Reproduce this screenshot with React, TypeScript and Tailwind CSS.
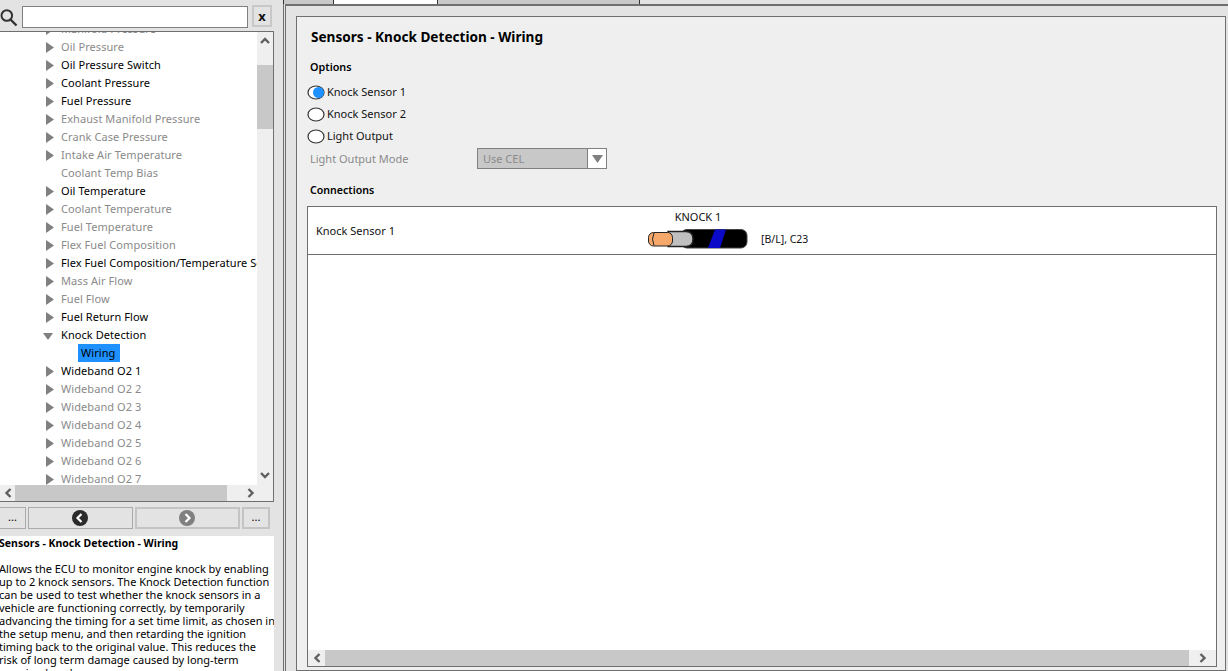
const font = { fontFamily: '"Noto Sans", sans-serif' }

type Row = { label: string; dark?: boolean; noArrow?: boolean }

const rows: Row[] = [
  { label: 'Manifold Pressure' },
  { label: 'Oil Pressure' },
  { label: 'Oil Pressure Switch', dark: true },
  { label: 'Coolant Pressure', dark: true },
  { label: 'Fuel Pressure', dark: true },
  { label: 'Exhaust Manifold Pressure' },
  { label: 'Crank Case Pressure' },
  { label: 'Intake Air Temperature' },
  { label: 'Coolant Temp Bias', noArrow: true },
  { label: 'Oil Temperature', dark: true },
  { label: 'Coolant Temperature' },
  { label: 'Fuel Temperature' },
  { label: 'Flex Fuel Composition' },
  { label: 'Flex Fuel Composition/Temperature Sensor', dark: true },
  { label: 'Mass Air Flow' },
  { label: 'Fuel Flow' },
  { label: 'Fuel Return Flow', dark: true },
]

const widebands = ['Wideband O2 2', 'Wideband O2 3', 'Wideband O2 4', 'Wideband O2 5', 'Wideband O2 6', 'Wideband O2 7']

function RightArrow() {
  return (
    <svg width="8" height="11" viewBox="0 0 8 11" className="shrink-0">
      <path d="M0 0 L8 5.5 L0 11 Z" fill="#808080" />
    </svg>
  )
}

function TreeRow({ label, dark, noArrow }: Row) {
  return (
    <div className="flex h-[18px] shrink-0 items-center whitespace-nowrap">
      <div className="flex w-[61px] shrink-0 justify-start pl-[46px]">{!noArrow && <RightArrow />}</div>
      <span className={dark ? 'text-black' : 'text-[#8a8a8a]'}>{label}</span>
    </div>
  )
}

function Chevron({ dir }: { dir: 'up' | 'down' | 'left' | 'right' }) {
  const d = {
    up: 'M1 6 L5 2 L9 6',
    down: 'M1 2 L5 6 L9 2',
    left: 'M6.5 1 L2.5 5 L6.5 9',
    right: 'M1.5 1 L5.5 5 L1.5 9',
  }[dir]
  const box = dir === 'up' || dir === 'down' ? '0 0 10 8' : '0 0 8 10'
  const w = dir === 'up' || dir === 'down' ? 10 : 8
  const h = dir === 'up' || dir === 'down' ? 8 : 10
  return (
    <svg width={w} height={h} viewBox={box}>
      <path d={d} fill="none" stroke="#606060" strokeWidth="2.4" />
    </svg>
  )
}

function Radio({ label, checked, top }: { label: string; checked?: boolean; top: string }) {
  return (
    <div className={`flex h-[18px] items-center ${top}`}>
      <svg width="18" height="15" viewBox="0 0 18 15" className="shrink-0">
        <ellipse cx="9" cy="7.5" rx="8" ry="6.5" fill="#fff" stroke="#333" strokeWidth="1.2" />
        {checked && <ellipse cx="11.5" cy="7.5" rx="5.5" ry="5.5" fill="#1e90ff" />}
      </svg>
      <span className="ml-[2px] text-[#111]">{label}</span>
    </div>
  )
}

function NavCircle({ dir, color }: { dir: 'left' | 'right'; color: string }) {
  return (
    <svg width="16" height="16" viewBox="0 0 16 16">
      <circle cx="8" cy="8" r="8" fill={color} />
      <path
        d={dir === 'left' ? 'M9.5 4 L5.5 8 L9.5 12' : 'M6.5 4 L10.5 8 L6.5 12'}
        fill="none"
        stroke="#fff"
        strokeWidth="2.2"
      />
    </svg>
  )
}

function Cable() {
  return (
    <svg width="100" height="20" viewBox="0 0 100 20" className="block">
      <rect x="33" y="0.5" width="66" height="18.5" rx="6" fill="#000" stroke="#444" />
      <path d="M67 0.5 H78 L72 19 H60 Z" fill="#0a0ac8" />
      <path d="M20 2.5 H38 Q45 2.5 45 10 Q45 17.5 38 17.5 H20 Z" fill="#c0c0c0" stroke="#222" strokeWidth="1.4" />
      <rect x="0.5" y="3.5" width="24" height="13.5" rx="5" fill="#f5a86a" stroke="#222" />
      <path d="M6 4 Q3 10 6 16.5" fill="none" stroke="#222" />
    </svg>
  )
}

export default function App() {
  return (
    <div className="flex h-[671px] w-[1228px] overflow-hidden bg-[#e3e3e3] text-[11px] leading-[18px]" style={font}>
      {/* Left column */}
      <div className="flex w-[283px] shrink-0 flex-col">
        <div className="flex h-[31px] w-[274px] items-start pt-[5px]">
          <div className="w-[22px] shrink-0 pt-[3px]">
            <svg width="18" height="19" viewBox="0 0 18 19" className="block">
              <circle cx="6.8" cy="7.5" r="5.3" fill="none" stroke="#333" strokeWidth="2" />
              <path d="M10.5 11.5 L16.5 17.5" stroke="#333" strokeWidth="2.4" />
            </svg>
          </div>
          <div className="mt-[1px] h-[22px] w-[226px] border border-[#808080] bg-white" />
          <div className="ml-[4px] flex h-[22px] w-[20px] items-center justify-center border-2 border-[#c8c8c8] text-[13px] font-bold text-[#111]">
            x
          </div>
        </div>

        {/* Tree */}
        <div className="flex h-[471px] w-[274px] flex-col border-t border-r border-b border-[#6f6f6f] bg-[#efefef]">
          <div className="flex h-[453px]">
            <div className="h-full w-[257px] overflow-hidden bg-white tracking-[0.07px]">
              <div className="-mt-[12px] flex flex-col">
                {rows.map((row) => (
                  <TreeRow key={row.label} {...row} />
                ))}
                <div className="flex h-[18px] shrink-0 items-center">
                  <div className="w-[61px] pl-[43px]">
                    <svg width="10" height="7" viewBox="0 0 10 7" className="mt-[2px] block">
                      <path d="M0 0 H10 L5 7 Z" fill="#808080" />
                    </svg>
                  </div>
                  <span className="text-black">Knock Detection</span>
                </div>
                <div className="flex h-[18px] shrink-0 items-center pl-[78px]">
                  <span className="h-[18px] w-[42px] bg-[#1e90ff] pl-[3px] text-black">Wiring</span>
                </div>
                <TreeRow label="Wideband O2 1" dark />
                {widebands.map((label) => (
                  <TreeRow key={label} label={label} />
                ))}
              </div>
            </div>
            <div className="flex flex-1 flex-col items-center pb-[6px]">
              <div className="flex h-[33px] w-full justify-center pt-[5px]">
                <Chevron dir="up" />
              </div>
              <div className="h-[64px] w-full shrink-0 bg-[#c8c8c8]" />
              <div className="flex-1" />
              <Chevron dir="down" />
            </div>
          </div>
          <div className="flex h-[16px] items-center">
            <div className="flex w-[15px] justify-center">
              <Chevron dir="left" />
            </div>
            <div className="h-full w-[212px] bg-[#c8c8c8]" />
            <div className="flex flex-1 justify-center pl-[2px]">
              <Chevron dir="right" />
            </div>
          </div>
        </div>

        {/* Nav buttons */}
        <div className="flex h-[34px] w-[274px] items-start pt-[5px]">
          <div className="flex h-[22px] w-[26px] items-center justify-center border border-l-0 border-[#aaa] pb-[2px]">...</div>
          <div className="ml-[2px] flex h-[22px] w-[105px] items-center justify-center border border-[#aaa] pr-[1px]">
            <NavCircle dir="left" color="#2b2b2b" />
          </div>
          <div className="ml-[2px] flex h-[22px] w-[105px] items-center justify-center border-2 border-[#c4c4c4] pr-[2px]">
            <NavCircle dir="right" color="#808080" />
          </div>
          <div className="ml-[2px] flex h-[22px] w-[28px] items-center justify-center border-2 border-[#c4c4c4] pb-[2px]">...</div>
        </div>

        {/* Help text */}
        <div className="w-[274px] flex-1 overflow-hidden bg-white leading-[13px] text-black">
          <div className="-ml-[1px] w-[276px] whitespace-nowrap pt-[1px]">
            <div className="text-[10.5px] font-bold">Sensors - Knock Detection - Wiring</div>
            <p className="mt-[12px]">
              Allows the ECU to monitor engine knock by enabling
              <br />
              up to 2 knock sensors. The Knock Detection function
              <br />
              can be used to test whether the knock sensors in a
              <br />
              vehicle are functioning correctly, by temporarily
              <br />
              advancing the timing for a set time limit, as chosen in
              <br />
              the setup menu, and then retarding the ignition
              <br />
              timing back to the original value. This reduces the
              <br />
              risk of long term damage caused by long-term
              <br />
              ongoing knock.
            </p>
          </div>
        </div>
      </div>

      {/* Right column */}
      <div className="flex flex-1 flex-col">
        <div className="flex h-[4px] shrink-0">
          <div className="h-full w-[50px] border-l border-[#333] bg-[#c8c8c8]" />
          <div className="h-full w-[105px] border-x border-[#333] bg-white" />
          <div className="h-full w-[202px] border-r border-[#333] bg-[#c8c8c8]" />
        </div>
        <div className="flex min-h-0 flex-1 flex-col border-l border-[#6f6f6f] pl-[1px]">
          <div className="flex min-h-0 flex-1 flex-col border-t-2 border-l border-[#6f6f6f] pt-[10px] pr-[2px] pl-[10px]">
            <div className="flex min-h-0 flex-1 flex-col border border-[#6f6f6f] bg-[#efefef] pr-[8px] pb-[3px] pl-[10px]">
              <div className="pt-[11px] pl-[4px] text-[13.6px] font-bold text-black">Sensors - Knock Detection - Wiring</div>
              <div className="mt-[12px] pl-[3px] text-[10.8px] font-semibold text-black">Options</div>
              <Radio label="Knock Sensor 1" checked top="mt-[7px]" />
              <Radio label="Knock Sensor 2" top="mt-[4px]" />
              <Radio label="Light Output" top="mt-[4px]" />
              <div className="mt-[3px] flex h-[21px] items-center pl-[3px] text-[#8a8a8a]">
                <span className="w-[167px]">Light Output Mode</span>
                <div className="flex h-[21px] w-[130px] border border-[#808080] bg-[#c8c8c8]">
                  <span className="flex-1 pl-[5px] leading-[19px]">Use CEL</span>
                  <div className="flex w-[19px] items-center justify-center border-l border-[#808080] bg-white">
                    <svg width="11" height="8" viewBox="0 0 11 8">
                      <path d="M0 0 H11 L5.5 8 Z" fill="#808080" />
                    </svg>
                  </div>
                </div>
              </div>
              <div className="mt-[12px] pl-[3px] text-[10.6px] font-semibold text-black">Connections</div>

              {/* Connections table */}
              <div className="mt-[7px] flex min-h-0 flex-1 flex-col border border-[#6f6f6f] bg-white text-[#111]">
                <div className="flex h-[48px] shrink-0 border-b border-[#6f6f6f]">
                  <div className="flex w-[340px] items-center pl-[8px]">Knock Sensor 1</div>
                  <div className="flex w-[100px] flex-col items-center pt-[1px]">
                    <span className="h-[21px]">KNOCK 1</span>
                    <Cable />
                  </div>
                  <span className="ml-[13px] pt-[23px] text-[10.5px]">[B/L], C23</span>
                </div>
                <div className="flex-1" />
                <div className="flex h-[16px] shrink-0 items-center bg-[#efefef]">
                  <div className="flex w-[17px] justify-center">
                    <Chevron dir="left" />
                  </div>
                  <div className="h-full flex-1 bg-[#c8c8c8]" />
                  <div className="flex w-[27px] justify-center">
                    <Chevron dir="right" />
                  </div>
                </div>
              </div>
            </div>
          </div>
        </div>
      </div>
    </div>
  )
}
